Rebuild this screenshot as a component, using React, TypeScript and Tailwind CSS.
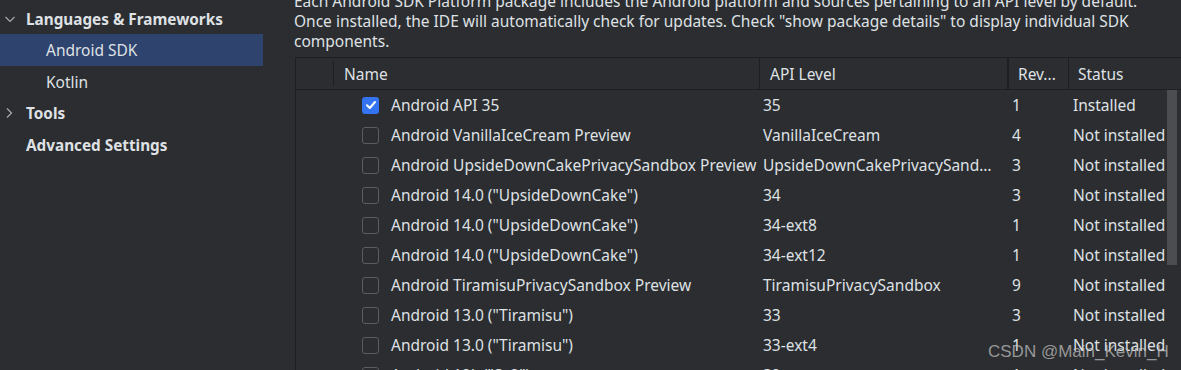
import React from "react";

const rows: { name: string; api: string; rev: string; status: string; checked?: boolean }[] = [
  { name: "Android API 35", api: "35", rev: "1", status: "Installed", checked: true },
  { name: "Android VanillaIceCream Preview", api: "VanillaIceCream", rev: "4", status: "Not installed" },
  { name: "Android UpsideDownCakePrivacySandbox Preview", api: "UpsideDownCakePrivacySandbox", rev: "3", status: "Not installed" },
  { name: 'Android 14.0 ("UpsideDownCake")', api: "34", rev: "3", status: "Not installed" },
  { name: 'Android 14.0 ("UpsideDownCake")', api: "34-ext8", rev: "1", status: "Not installed" },
  { name: 'Android 14.0 ("UpsideDownCake")', api: "34-ext12", rev: "1", status: "Not installed" },
  { name: "Android TiramisuPrivacySandbox Preview", api: "TiramisuPrivacySandbox", rev: "9", status: "Not installed" },
  { name: 'Android 13.0 ("Tiramisu")', api: "33", rev: "3", status: "Not installed" },
  { name: 'Android 13.0 ("Tiramisu")', api: "33-ext4", rev: "1", status: "Not installed" },
  { name: 'Android 12L ("Sv2")', api: "32", rev: "1", status: "Not installed" },
];

function Checkbox({ checked }: { checked?: boolean }) {
  if (checked) {
    return (
      <div className="w-[17px] h-[17px] rounded-[3px] bg-[#3574f0] flex items-center justify-center shrink-0">
        <svg width="12" height="12" viewBox="0 0 12 12">
          <path d="M2 6.3 L4.8 9 L10 3" stroke="#ffffff" strokeWidth="2" fill="none" strokeLinecap="round" strokeLinejoin="round" />
        </svg>
      </div>
    );
  }
  return <div className="w-[17px] h-[17px] rounded-[3px] border border-[#5a5d63] bg-[#2b2d30] shrink-0" />;
}

function ChevronDown() {
  return (
    <svg width="12" height="12" viewBox="0 0 12 12" className="shrink-0">
      <path d="M1.5 4 L6 8.5 L10.5 4" stroke="#a8abb0" strokeWidth="1.2" fill="none" />
    </svg>
  );
}
function ChevronRight() {
  return (
    <svg width="12" height="12" viewBox="0 0 12 12" className="shrink-0">
      <path d="M4 1.5 L8.5 6 L4 10.5" stroke="#a8abb0" strokeWidth="1.2" fill="none" />
    </svg>
  );
}

export default function App() {
  return (
    <div
      className="relative w-[1181px] h-[370px] overflow-hidden bg-[#2b2d30] text-[#dfe1e5] flex"
      style={{ fontFamily: '"Noto Sans", "Open Sans", sans-serif' }}
    >
      {/* Sidebar */}
      <div className="w-[263px] shrink-0 flex flex-col pt-[3px] text-[15.5px]">
        <div className="h-[31px] flex items-center pl-[4px] gap-[10px] font-bold text-[15.3px]">
          <ChevronDown />
          <span className="pt-[2px]">Languages &amp; Frameworks</span>
        </div>
        <div className="h-[32px] flex items-center pl-[46px] pt-[2px] bg-[#2e436e]">Android SDK</div>
        <div className="h-[31px] flex items-center pl-[46px] pt-[2px]">Kotlin</div>
        <div className="h-[31px] flex items-center pl-[3px] gap-[11px] font-bold text-[15.3px]">
          <ChevronRight />
          <span className="pt-[2px]">Tools</span>
        </div>
        <div className="h-[33px] flex items-center pl-[26px] pt-[2px] font-bold text-[15.3px]">Advanced Settings</div>
      </div>

      {/* Main */}
      <div className="flex-1 pl-[31px] flex flex-col">
        <div className="mt-[-9px] text-[15.5px] leading-[20px] whitespace-nowrap">
          <div>Each Android SDK Platform package includes the Android platform and sources pertaining to an API level by default.</div>
          <div>Once installed, the IDE will automatically check for updates. Check "show package details" to display individual SDK</div>
          <div>components.</div>
        </div>

        <div className="mt-[6px] ml-[1px] border-t border-l border-[#1e1f22] flex-1 relative text-[15.5px]">
          {/* Header */}
          <div className="h-[32px] flex border-b border-[#1e1f22]">
            <div className="w-[38px] border-r border-[#1e1f22] my-[3px]" />
            <div className="w-[425px] flex items-center pl-[10px] pt-[2px]">Name</div>
            <div className="w-[248px] flex items-center pl-[10px] pt-[2px] border-l border-[#1e1f22]">API Level</div>
            <div className="w-[61px] flex items-center pl-[9px] pt-[2px] border-l-2 border-[#1e1f22]">Rev...</div>
            <div className="flex-1 flex items-center pl-[9px] pt-[2px] border-l border-[#1e1f22]">Status</div>
          </div>
          {/* Rows */}
          <div className="flex flex-col">
            {rows.map((r, i) => (
              <div key={i} className="h-[30px] flex items-center">
                <div className="w-[38px] shrink-0" />
                <div className="w-[425px] shrink-0 flex items-center pl-[28px] gap-[12px] whitespace-nowrap overflow-hidden">
                  <Checkbox checked={r.checked} />
                  <span className="pt-[2px]">{r.name}</span>
                </div>
                <div className="w-[248px] shrink-0 pl-[4px] pr-[6px] pt-[2px] whitespace-nowrap overflow-hidden text-ellipsis">{r.api}</div>
                <div className="w-[61px] shrink-0 pl-[5px] pt-[2px]">{r.rev}</div>
                <div className="flex-1 pl-[5px] pt-[2px] whitespace-nowrap">{r.status}</div>
              </div>
            ))}
          </div>
          {/* Scrollbar */}
          <div className="absolute left-[871px] top-[32px] w-[10px] h-[175px] bg-[#4b4d51]" />
        </div>
      </div>

      {/* Watermark */}
      <div
        className="absolute left-[988px] top-[339px] text-[17px] text-[#c8c8c8]/70 whitespace-nowrap"
        style={{ fontFamily: '"Liberation Sans", Arial, sans-serif' }}
      >
        CSDN @Main_Kevin_H
      </div>
    </div>
  );
}
